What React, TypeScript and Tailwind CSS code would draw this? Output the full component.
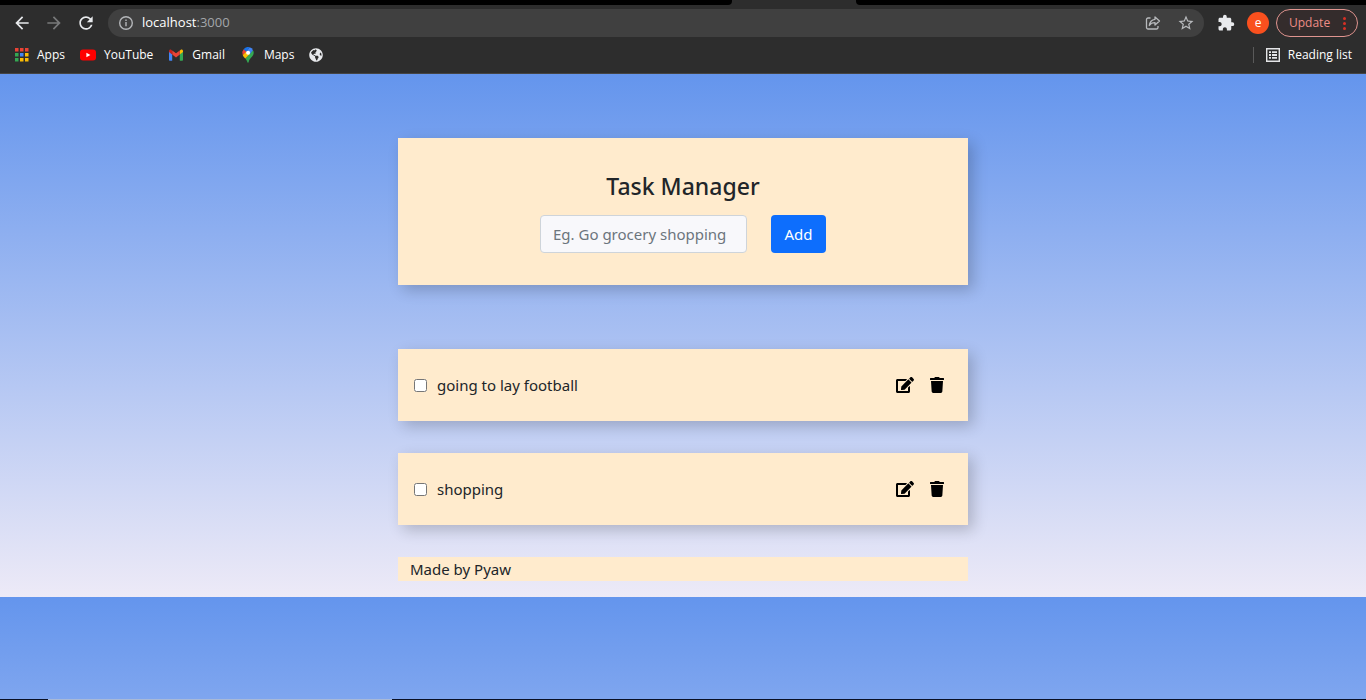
import { useState } from "react";
import type { ReactNode } from "react";
import { FaEdit, FaGlobeAmericas, FaTrash } from "react-icons/fa";
import { MdArrowBack, MdArrowForward, MdExtension, MdRefresh, MdStarBorder } from "react-icons/md";

function AppsIcon() {
  const colors = ["#ea4335", "#ea4335", "#ea4335", "#34a853", "#4285f4", "#fbbc04", "#34a853", "#fbbc04", "#fbbc04"];
  return (
    <svg width="14" height="14" viewBox="0 0 14 14" aria-hidden="true">
      {colors.map((c, i) => (
        <rect key={i} x={(i % 3) * 5} y={Math.floor(i / 3) * 5} width="3.500" height="3.500" fill={c} />
      ))}
    </svg>
  );
}

function YouTubeIcon() {
  return (
    <svg width="16" height="16" viewBox="0 0 16 16" aria-hidden="true">
      <rect x="0" y="2.5" width="16" height="11" rx="3" fill="#f00" />
      <path d="M6.4 5.7v4.6L10.4 8z" fill="#fff" />
    </svg>
  );
}

function GmailIcon() {
  return (
    <svg width="16" height="16" viewBox="0 0 16 16" aria-hidden="true">
      <path d="M1 4.2v8.6c0 .6.4 1 1 1h2.2V7.2z" fill="#4285f4" />
      <path d="M11.8 7.2v6.6H14c.6 0 1-.4 1-1V4.2z" fill="#34a853" />
      <path d="M11.8 3.6v3.9L15 5.1v-1c0-1.300-1.400-2-2.400-1.200z" fill="#fbbc04" />
      <path d="M4.200 7.500V3.400L8 6.200l3.800-2.800v4.100L8 10.400z" fill="#ea4335" />
      <path d="M1 4.100v1l3.200 2.400V3.600l-.8-.7C2.400 2.100 1 2.800 1 4.100z" fill="#c5221f" />
    </svg>
  );
}

function MapsIcon() {
  return (
    <svg width="16" height="16" viewBox="0 0 16 16" aria-hidden="true">
      <path d="M13 3.200c.5.800.7 1.700.7 2.600 0 3.700-4.200 5-5 9.300-.1.500-.3.700-.7.700s-.6-.2-.7-.7c-.3-1.600-1.100-2.700-2-3.700z" fill="#34a853" />
      <path d="M2.700 7.900c.5 1.500 1.600 2.500 2.600 3.500L9.800 6.900 6.200 4z" fill="#fbbc04" />
      <path d="M3.600 2.200A5.600 5.600 0 0 0 2.700 7.900L6.500 4.500z" fill="#ea4335" />
      <path d="M9.700.3a5.600 5.600 0 0 0-6.100 1.900l2.900 2.500z" fill="#1a73e8" />
      <path d="M9.700.3 6.500 4.500l3.200 2.800L13 3.200A5.600 5.600 0 0 0 9.700.3z" fill="#4285f4" />
      <circle cx="8.100" cy="5.700" r="2" fill="#fff" />
    </svg>
  );
}

function InfoIcon() {
  return (
    <svg width="14" height="14" viewBox="0 0 14 14" fill="none" stroke="#b4b6b9" strokeWidth="1.400" aria-hidden="true">
      <circle cx="7" cy="7" r="6.300" />
      <path d="M7 6v4.300M7 3.500v1.400" />
    </svg>
  );
}

function ShareIcon() {
  return (
    <svg width="16" height="16" viewBox="0 0 16 16" fill="none" stroke="#b8babd" strokeWidth="1.300" strokeLinejoin="round" aria-hidden="true">
      <path d="M5.500 3H3a1.500 1.500 0 0 0-1.500 1.500v8A1.500 1.500 0 0 0 3 14h8.500a1.500 1.500 0 0 0 1.500-1.500V11" />
      <path d="M10 2l4.500 4L10 10V7.700C7.300 7.700 5.500 8.600 4.300 10.500 4.700 7.300 6.500 4.800 10 4.300z" />
    </svg>
  );
}

function ReadingListIcon() {
  return (
    <svg width="14" height="14" viewBox="0 0 14 14" fill="#e4e5e7" aria-hidden="true">
      <path fillRule="evenodd" d="M0 0h14v14H0zM1.400 1.400v11.200h11.200V1.400z" />
      <path d="M3 3.200h2v1.800H3zM6 3.200h5v1.800H6zM3 6.100h2v1.800H3zM6 6.100h5v1.800H6zM3 9h2v1.800H3zM6 9h5v1.800H6z" />
    </svg>
  );
}

function Bookmark({ icon, label, hiddenLabel }: { icon: ReactNode; label?: string; hiddenLabel?: string }) {
  return (
    <a href="#" aria-label={hiddenLabel} className="flex items-center gap-2">
      {icon}
      {label}
    </a>
  );
}

function BrowserChrome() {
  return (
    <header className="border-b border-[#454545] bg-[#2d2d2d] font-['Open_Sans','Noto_Sans',sans-serif] text-white">
      <div className="flex h-[5px]">
        <div className="w-[732px] rounded-br bg-black" />
        <div className="w-[124px]" />
        <div className="flex-1 rounded-bl bg-black" />
      </div>
      <div className="flex h-9 items-center pr-2 pl-3">
        <div className="flex w-24 shrink-0 gap-3 text-[20px] text-[#e8eaed]">
          <button type="button" aria-label="Back"><MdArrowBack /></button>
          <button type="button" aria-label="Forward" className="text-[#78797a]"><MdArrowForward /></button>
          <button type="button" aria-label="Reload"><MdRefresh /></button>
        </div>
        <div className="flex h-7 flex-1 items-center rounded-full bg-[#404040] px-[11px]">
          <InfoIcon />
          <a href="#" className="ml-[9px] flex-1 text-[13px]">
            localhost<span className="text-[#a3a6aa]">:3000</span>
          </a>
          <div className="flex items-center gap-4 text-[18px] text-[#b8babd]">
            <button type="button" aria-label="Share"><ShareIcon /></button>
            <button type="button" aria-label="Bookmark this page" className="-mr-0.5"><MdStarBorder /></button>
          </div>
        </div>
        <button type="button" aria-label="Extensions" className="ml-[13px] text-[18px] text-[#e8eaed]"><MdExtension /></button>
        <button type="button" className="ml-3 flex size-[22px] items-center justify-center rounded-full bg-[#f9501e] text-[12px] leading-none">e</button>
        <button type="button" className="ml-[7px] flex h-7 w-[82px] items-center justify-between rounded-full border border-[#e0948f] bg-[#342c2c] pr-[11px] pl-3 text-[12px] text-[#ee8d86]">
          Update
          <svg width="3" height="13" viewBox="0 0 3 13" fill="#d93025" aria-hidden="true">
            <circle cx="1.500" cy="1.500" r="1.500" />
            <circle cx="1.500" cy="6.500" r="1.500" />
            <circle cx="1.500" cy="11.500" r="1.500" />
          </svg>
        </button>
      </div>
      <nav className="flex h-8 items-center justify-between pr-[14px] pb-1 pl-[15px] text-[12px]">
        <div className="flex items-center gap-[15px]">
          <Bookmark icon={<AppsIcon />} label="Apps" />
          <Bookmark icon={<YouTubeIcon />} label="YouTube" />
          <Bookmark icon={<GmailIcon />} label="Gmail" />
          <Bookmark icon={<MapsIcon />} label="Maps" />
          <Bookmark icon={<FaGlobeAmericas className="text-[14px] text-[#e8eaed]" />} hiddenLabel="Website" />
        </div>
        <div className="flex items-center gap-3">
          <div className="h-4 w-px bg-[#5a5a5a]" />
          <Bookmark icon={<ReadingListIcon />} label="Reading list" />
        </div>
      </nav>
    </header>
  );
}

type Task = { id: number; title: string; done: boolean };

const card = "bg-[#ffebcd] shadow-[5px_5px_14px_rgba(0,0,0,0.2)]";

export default function App() {
  const [tasks, setTasks] = useState<Task[]>([
    { id: 1, title: "going to lay football", done: false },
    { id: 2, title: "shopping", done: false },
  ]);
  const [title, setTitle] = useState("");

  const addTask = () => {
    if (!title.trim()) return;
    setTasks([...tasks, { id: Date.now(), title, done: false }]);
    setTitle("");
  };

  return (
    <div className="flex min-h-screen flex-col">
      <BrowserChrome />
      <main className="flex-1 bg-[linear-gradient(#6495ed,#edeaf7)] bg-[length:100%_523px] px-4 pt-16 font-['Noto_Sans','Open_Sans',sans-serif] text-[15px] leading-6 text-[#212529]">
        <div className="mx-auto max-w-[570px]">
          <form
            className={`flex flex-col items-center gap-[13px] px-4 py-8 ${card}`}
            onSubmit={(e) => {
              e.preventDefault();
              addTask();
            }}
          >
            <h1 className="text-[23px] leading-8 font-medium">Task Manager</h1>
            <div className="flex gap-6">
              <input
                type="text"
                aria-label="New task"
                placeholder="Eg. Go grocery shopping"
                value={title}
                onChange={(e) => setTitle(e.target.value)}
                className="h-[38px] w-[207px] rounded border border-[#ced4da] bg-[#f8f8fb] px-3 placeholder:text-[#6c757d]"
              />
              <button type="submit" className="h-[38px] w-[55px] rounded bg-[#0d6efd] text-white">
                Add
              </button>
            </div>
          </form>
          <ul className="mt-16 flex flex-col gap-8">
            {tasks.map((task) => (
              <li key={task.id} className={`flex h-[72px] items-center pr-6 pl-4 ${card}`}>
                <label className="flex flex-1 items-center gap-[10px]">
                  <input
                    type="checkbox"
                    checked={task.done}
                    onChange={() => setTasks(tasks.map((t) => (t.id === task.id ? { ...t, done: !t.done } : t)))}
                    className="size-[13px]"
                  />
                  {task.title}
                </label>
                <div className="flex items-center gap-4 text-black">
                  <button type="button" aria-label={`Edit ${task.title}`}>
                    <FaEdit className="h-4 w-[18px]" />
                  </button>
                  <button
                    type="button"
                    aria-label={`Delete ${task.title}`}
                    onClick={() => setTasks(tasks.filter((t) => t.id !== task.id))}
                  >
                    <FaTrash className="h-4 w-[14px]" />
                  </button>
                </div>
              </li>
            ))}
          </ul>
          <footer className="mt-8 bg-[#ffebcd] px-3">Made by Pyaw</footer>
        </div>
      </main>
      <div className="flex h-px bg-[#0a1024]">
        <div className="ml-12 w-[344px] bg-[#a9b9d6]" />
      </div>
    </div>
  );
}
